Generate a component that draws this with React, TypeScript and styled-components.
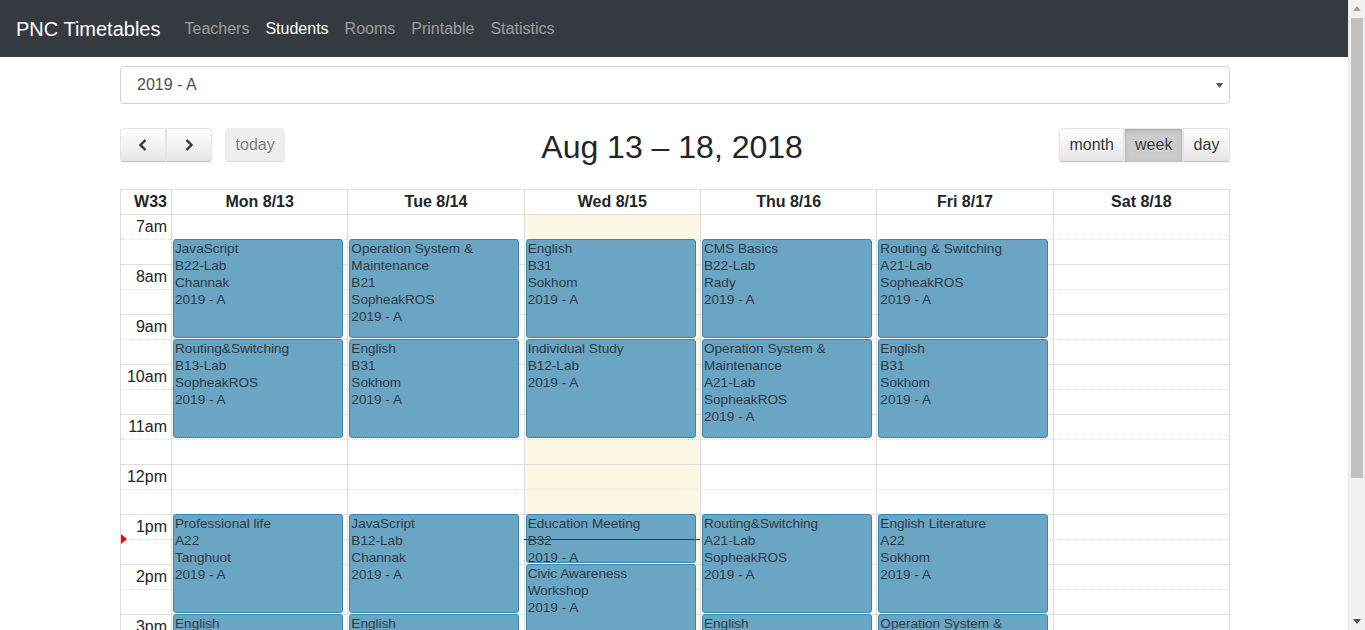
import styled, { createGlobalStyle } from "styled-components";

const GlobalStyle = createGlobalStyle`
  html, body { overflow: hidden; }
  * { box-sizing: border-box; }
  body {
    margin: 0;
    font-family: "Liberation Sans", Arial, sans-serif;
    font-size: 16px;
    line-height: 1.5;
    color: #212529;
    background: #fff;
  }
`;

type CalEvent = { day: number; start: number; end: number; lines: string[] };

// minutes are counted from 7:00
const DAYS = ["Mon 8/13", "Tue 8/14", "Wed 8/15", "Thu 8/16", "Fri 8/17", "Sat 8/18"];
const TODAY = 2;
const SLOT_H = 25;
const SLOTS = 22;
const NOW_MIN = 390;

const EVENTS: CalEvent[] = [
  { day: 0, start: 30, end: 150, lines: ["JavaScript", "B22-Lab", "Channak", "2019 - A"] },
  { day: 0, start: 150, end: 270, lines: ["Routing&Switching", "B13-Lab", "SopheakROS", "2019 - A"] },
  { day: 0, start: 360, end: 480, lines: ["Professional life", "A22", "Tanghuot", "2019 - A"] },
  { day: 0, start: 480, end: 600, lines: ["English", "B31", "Sokhom", "2019 - A"] },
  { day: 1, start: 30, end: 150, lines: ["Operation System &", "Maintenance", "B21", "SopheakROS", "2019 - A"] },
  { day: 1, start: 150, end: 270, lines: ["English", "B31", "Sokhom", "2019 - A"] },
  { day: 1, start: 360, end: 480, lines: ["JavaScript", "B12-Lab", "Channak", "2019 - A"] },
  { day: 1, start: 480, end: 600, lines: ["English", "B31", "Sokhom", "2019 - A"] },
  { day: 2, start: 30, end: 150, lines: ["English", "B31", "Sokhom", "2019 - A"] },
  { day: 2, start: 150, end: 270, lines: ["Individual Study", "B12-Lab", "2019 - A"] },
  { day: 2, start: 360, end: 420, lines: ["Education Meeting", "B32", "2019 - A"] },
  { day: 2, start: 420, end: 540, lines: ["Civic Awareness", "Workshop", "2019 - A"] },
  { day: 3, start: 30, end: 150, lines: ["CMS Basics", "B22-Lab", "Rady", "2019 - A"] },
  { day: 3, start: 150, end: 270, lines: ["Operation System &", "Maintenance", "A21-Lab", "SopheakROS", "2019 - A"] },
  { day: 3, start: 360, end: 480, lines: ["Routing&Switching", "A21-Lab", "SopheakROS", "2019 - A"] },
  { day: 3, start: 480, end: 600, lines: ["English", "B31", "Sokhom", "2019 - A"] },
  { day: 4, start: 30, end: 150, lines: ["Routing & Switching", "A21-Lab", "SopheakROS", "2019 - A"] },
  { day: 4, start: 150, end: 270, lines: ["English", "B31", "Sokhom", "2019 - A"] },
  { day: 4, start: 360, end: 480, lines: ["English Literature", "A22", "Sokhom", "2019 - A"] },
  { day: 4, start: 480, end: 600, lines: ["Operation System &", "Maintenance", "B21", "SopheakROS", "2019 - A"] },
];

function hourLabel(slot: number): string {
  if (slot % 2 !== 0) return "";
  const h = 7 + slot / 2;
  if (h === 12) return "12pm";
  return h > 12 ? `${h - 12}pm` : `${h}am`;
}

export default function App() {
  return (
    <>
      <GlobalStyle />
      <Page>
        <Navbar>
          <Brand>PNC Timetables</Brand>
          <NavLink>Teachers</NavLink>
          <NavLink $active>Students</NavLink>
          <NavLink>Rooms</NavLink>
          <NavLink>Printable</NavLink>
          <NavLink>Statistics</NavLink>
        </Navbar>

        <Container>
          <SelectBox>
            <span>2019 - A</span>
            <svg width="7" height="5" viewBox="0 0 7 5">
              <path d="M0 0h7L3.5 5z" fill="#555" />
            </svg>
          </SelectBox>

          <Toolbar>
            <ToolbarSide>
              <ButtonGroup>
                <Btn $wide aria-label="prev">
                  <svg width="12" height="14" viewBox="0 0 12 14">
                    <path d="M8.5 2L3.5 7l5 5" stroke="#333" strokeWidth="2.4" fill="none" />
                  </svg>
                </Btn>
                <Btn $wide aria-label="next">
                  <svg width="12" height="14" viewBox="0 0 12 14">
                    <path d="M3.5 2l5 5-5 5" stroke="#333" strokeWidth="2.4" fill="none" />
                  </svg>
                </Btn>
              </ButtonGroup>
              <ButtonGroup>
                <Btn $disabled>today</Btn>
              </ButtonGroup>
            </ToolbarSide>
            <Title>Aug 13 – 18, 2018</Title>
            <ToolbarSide>
              <ButtonGroup>
                <Btn>month</Btn>
                <Btn $active>week</Btn>
                <Btn>day</Btn>
              </ButtonGroup>
            </ToolbarSide>
          </Toolbar>

          <Calendar>
            <HeadRow>
              <AxisHead>W33</AxisHead>
              {DAYS.map((d) => (
                <DayHead key={d}>{d}</DayHead>
              ))}
            </HeadRow>

            <TimeGrid>
              <BgLayer>
                <div />
                {DAYS.map((d, i) => (
                  <BgCol key={d} $today={i === TODAY} />
                ))}
              </BgLayer>

              <Slots>
                {Array.from({ length: SLOTS }, (_, i) => (
                  <SlotRow key={i} $minor={i % 2 === 1}>
                    <SlotLabel>{hourLabel(i)}</SlotLabel>
                  </SlotRow>
                ))}
              </Slots>

              <EventLayer>
                <AxisCol>
                  <NowArrow style={{ top: (NOW_MIN / 30) * SLOT_H - 5 }} />
                </AxisCol>
                {DAYS.map((d, i) => (
                  <DayCol key={d}>
                    {EVENTS.filter((e) => e.day === i).map((e) => (
                      <Event
                        key={e.start}
                        style={{
                          top: (e.start / 30) * SLOT_H,
                          height: ((e.end - e.start) / 30) * SLOT_H - 1,
                        }}
                      >
                        {e.lines.map((l) => (
                          <div key={l}>{l}</div>
                        ))}
                      </Event>
                    ))}
                    {i === TODAY && <NowLine style={{ top: (NOW_MIN / 30) * SLOT_H }} />}
                  </DayCol>
                ))}
              </EventLayer>
            </TimeGrid>
          </Calendar>
        </Container>
      </Page>

      <Scrollbar aria-hidden="true">
        <ScrollArrow>
          <svg width="8" height="5" viewBox="0 0 8 5">
            <path d="M0 5L4 0l4 5z" fill="#a3a3a3" />
          </svg>
        </ScrollArrow>
        <ScrollTrack>
          <ScrollThumb />
        </ScrollTrack>
        <ScrollArrow>
          <svg width="8" height="5" viewBox="0 0 8 5">
            <path d="M0 0h8L4 5z" fill="#505050" />
          </svg>
        </ScrollArrow>
      </Scrollbar>
    </>
  );
}

const Page = styled.div`
  width: 1350px;
`;

const Navbar = styled.nav`
  display: flex;
  align-items: center;
  height: 57px;
  padding: 0 16px;
  background: #343a40;
`;

const Brand = styled.a`
  font-size: 20px;
  line-height: 30px;
  color: #fff;
  margin-right: 16px;
`;

const NavLink = styled.a<{ $active?: boolean }>`
  padding: 0 8px;
  font-size: 16px;
  color: ${(p) => (p.$active ? "#fff" : "rgba(255, 255, 255, 0.5)")};
`;

const Container = styled.div`
  width: 1110px;
  margin: 0 auto;
  padding-bottom: 24px;
`;

const SelectBox = styled.div`
  margin-top: 9px;
  height: 38px;
  display: flex;
  align-items: center;
  justify-content: space-between;
  padding: 0 6px 0 16px;
  border: 1px solid #ced4da;
  border-radius: 4px;
  color: #495057;
  font-size: 16px;
`;

const Toolbar = styled.div`
  display: flex;
  align-items: flex-start;
  margin-top: 24px;
  margin-bottom: 23px;
`;

const ToolbarSide = styled.div`
  display: flex;
  gap: 13px;
`;

const Title = styled.h2`
  flex: 1;
  margin: 0;
  text-align: center;
  font-size: 32px;
  font-weight: 400;
  line-height: 38px;
  color: #212529;
`;

const ButtonGroup = styled.div`
  display: flex;
  & > button:first-child {
    border-top-left-radius: 4px;
    border-bottom-left-radius: 4px;
  }
  & > button:last-child {
    border-top-right-radius: 4px;
    border-bottom-right-radius: 4px;
  }
`;

const Btn = styled.button<{ $active?: boolean; $disabled?: boolean; $wide?: boolean }>`
  height: 34px;
  padding: 0 ${(p) => (p.$wide ? "16px" : "9.6px")};
  display: flex;
  align-items: center;
  justify-content: center;
  font-family: inherit;
  font-size: 16px;
  color: #333;
  border: 1px solid;
  border-color: #e6e6e6 #e6e6e6 #bfbfbf;
  border-radius: 0;
  background-color: ${(p) => (p.$active ? "#ccc" : p.$disabled ? "#e6e6e6" : "#f5f5f5")};
  background-image: ${(p) =>
    p.$active || p.$disabled ? "none" : "linear-gradient(to bottom, #fff, #e6e6e6)"};
  box-shadow: ${(p) =>
    p.$active
      ? "inset 0 2px 4px rgba(0,0,0,0.15), 0 1px 2px rgba(0,0,0,0.05)"
      : p.$disabled
      ? "none"
      : "inset 0 1px 0 rgba(255,255,255,0.2), 0 1px 2px rgba(0,0,0,0.05)"};
  text-shadow: 0 1px 1px rgba(255, 255, 255, 0.75);
  opacity: ${(p) => (p.$disabled ? 0.65 : 1)};
  cursor: ${(p) => (p.$disabled ? "default" : "pointer")};
`;

const Calendar = styled.div`
  border: 1px solid #ddd;
`;

const COLS = "50px repeat(6, 1fr)";

const HeadRow = styled.div`
  display: grid;
  grid-template-columns: ${COLS};
  height: 24px;
  font-weight: 700;
  line-height: 24px;
`;

const AxisHead = styled.div`
  text-align: right;
  padding: 0 4px;
`;

const DayHead = styled.div`
  text-align: center;
  border-left: 1px solid #ddd;
`;

const TimeGrid = styled.div`
  position: relative;
`;

const BgLayer = styled.div`
  position: absolute;
  inset: 0;
  z-index: 0;
  display: grid;
  grid-template-columns: ${COLS};
`;

const BgCol = styled.div<{ $today?: boolean }>`
  border-left: 1px solid #ddd;
  background: ${(p) => (p.$today ? "#fcf8e3" : "transparent")};
`;

const Slots = styled.div`
  position: relative;
  z-index: 1;
`;

const SlotRow = styled.div<{ $minor?: boolean }>`
  height: ${SLOT_H}px;
  border-top: 1px ${(p) => (p.$minor ? "dotted" : "solid")} #ddd;
  display: grid;
  grid-template-columns: 50px 1fr;
`;

const SlotLabel = styled.div`
  text-align: right;
  padding: 0 4px;
  line-height: 24px;
  font-size: 16px;
  white-space: nowrap;
`;

const EventLayer = styled.div`
  position: absolute;
  inset: 0;
  z-index: 2;
  display: grid;
  grid-template-columns: ${COLS};
`;

const AxisCol = styled.div`
  position: relative;
`;

const DayCol = styled.div`
  position: relative;
  margin-left: 1px;
`;

const Event = styled.div`
  position: absolute;
  left: 1px;
  right: 2.5%;
  overflow: hidden;
  padding: 0 1px;
  background: #6aa5c3;
  border: 1px solid #3a87ad;
  border-radius: 3px;
  color: #2f3b44;
  font-size: 13.6px;
  line-height: 17px;
  white-space: nowrap;
`;

const NowLine = styled.div`
  position: absolute;
  left: -1px;
  right: 0;
  border-top: 1px solid #c00;
  z-index: 3;
`;

const NowArrow = styled.div`
  position: absolute;
  left: 0;
  width: 0;
  height: 0;
  border-style: solid;
  border-color: transparent transparent transparent red;
  border-width: 5px 0 5px 6px;
`;

const Scrollbar = styled.div`
  position: fixed;
  top: 0;
  right: 0;
  bottom: 0;
  width: 17px;
  display: flex;
  flex-direction: column;
  background: #f1f1f1;
  border-left: 1px solid #e8e8e8;
`;

const ScrollArrow = styled.div`
  height: 17px;
  flex: none;
  display: flex;
  align-items: center;
  justify-content: center;
`;

const ScrollTrack = styled.div`
  flex: 1;
  padding: 1px 2px;
`;

const ScrollThumb = styled.div`
  height: 460px;
  background: #c1c1c1;
`;
